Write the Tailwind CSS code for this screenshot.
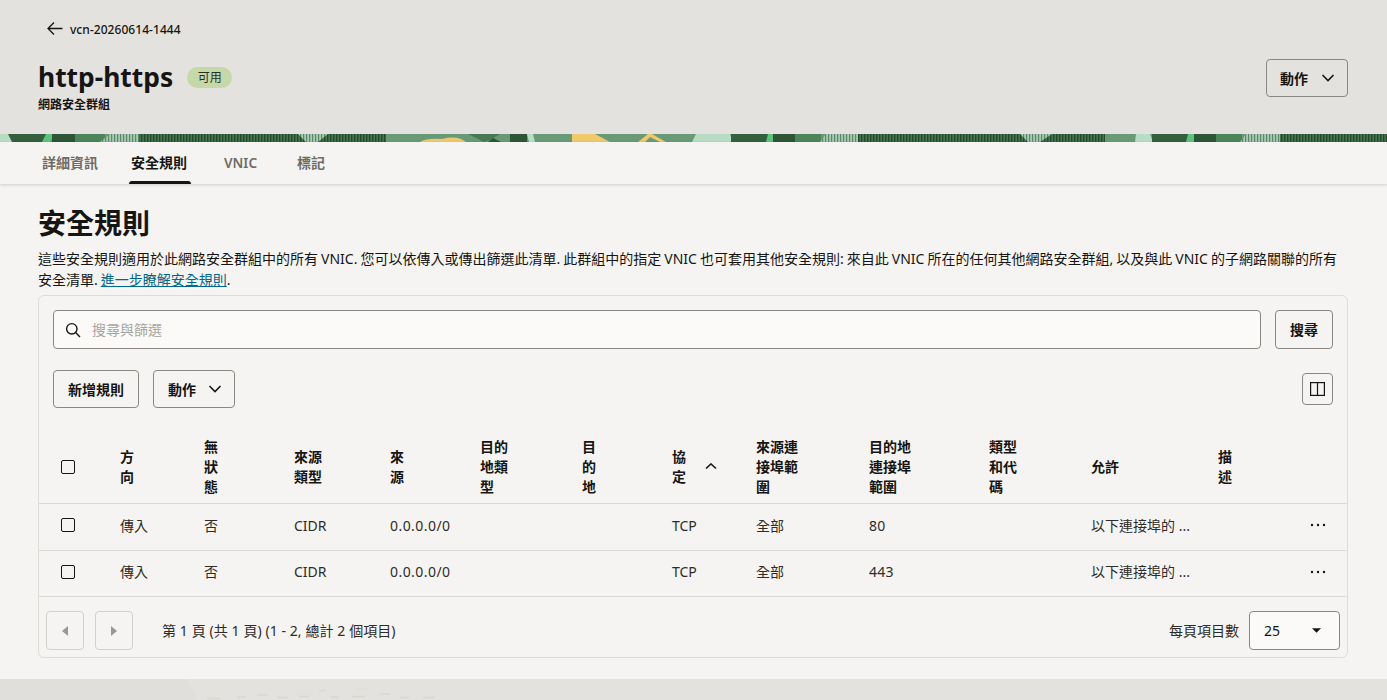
<!DOCTYPE html>
<html lang="zh-Hant">
<head>
<meta charset="utf-8">
<title>http-https</title>
<script src="https://cdn.jsdelivr.net/npm/@tailwindcss/browser@4"></script>
</head>
<body class="m-0 h-[700px] w-[1387px] overflow-hidden bg-[#f5f4f2] font-['Noto_Sans','Noto_Sans_CJK_TC',sans-serif] text-[14px] text-[#161513]">

<header class="h-[134px] bg-[#e4e2de] relative">
  <div class="flex items-center pl-[47px] pt-[20px] h-[38px]">
    <svg width="16" height="16" viewBox="0 0 16 16" fill="none" stroke="#161513" stroke-width="1.3"><path d="M15.5 8H1M7 2 1 8l6 6" transform="translate(0 -.5)"/></svg>
    <span class="ml-[7px] mt-[2px] text-[12px] font-medium leading-[18px] tracking-[0.05px]">vcn-20260614-1444</span>
  </div>
  <div class="flex items-start pl-[38px] pr-[39px] justify-between mt-[21px]">
    <div>
      <div class="flex items-center h-[36px]">
        <h1 class="text-[26.4px] font-bold leading-[36px] m-0">http-https</h1>
        <span class="ml-[14px] h-[21px] w-[45px] rounded-full bg-[#c4d9a7] text-[12px] leading-[21px] text-center text-[#2e2c29]">可用</span>
      </div>
      <div class="text-[12px] font-bold leading-[16px] mt-[2px]">網路安全群組</div>
    </div>
    <button class="h-[38px] w-[82px] rounded-[4px] border border-[#8a8783] flex items-center pl-[13px] font-semibold">
      <span>動作</span>
      <svg class="ml-[13px]" width="14" height="8" viewBox="0 0 14 8" fill="none" stroke="#161513" stroke-width="1.6"><path d="M1.5 1 7 6.5 12.5 1"/></svg>
    </button>
  </div>
</header>

<svg class="block" width="1387" height="8" viewBox="0 0 1387 8">
  <defs>
    <pattern id="fp" width="3" height="8" patternUnits="userSpaceOnUse">
      <rect width="3" height="8" fill="#447552"/>
      <rect width="1.4" height="8" fill="#28492f"/>
    </pattern>
    <pattern id="fl" width="3" height="8" patternUnits="userSpaceOnUse">
      <rect width="3" height="8" fill="#a9c9b3"/>
      <rect width="1.2" height="8" fill="#5b8a69"/>
    </pattern>
  </defs>
  <rect width="1387" height="8" fill="#699a78"/>
  <rect x="0" width="12" height="8" fill="#b8dcc4"/>
  <polygon points="8,0 48,0 46,8 12,8" fill="#34603f"/>
  <polygon points="46,0 54,0 50,8 42,8" fill="#5cc47a"/>
  <rect x="52" width="24" height="8" fill="#2e5538"/>
  <rect x="75" width="30" height="8" fill="#4e8459"/>
  <polygon points="110,0 140,0 140,8 100,8" fill="url(#fl)"/>
  <rect x="139" width="247" height="8" fill="url(#fp)"/>
  <polygon points="298,0 328,0 318,8 306,8" fill="url(#fl)"/>
  <path d="M420 8q6-4 22-3 15-4 24 3z" fill="#f0c96a"/>
  <path d="M468 0h32l-8 5-8 3-8-4z" fill="#457a55"/>
  <path d="M488 8l5-4 8 4z" fill="#2e5538"/>
  <rect x="510" width="17" height="8" fill="#2e5538"/>
  <polygon points="527,0 533,0 535,8 529,8" fill="#b8dcc4"/>
  <polygon points="572,0 595,0 610,8 572,8" fill="#f0c96a"/>
  <polygon points="638,8 648,0 652,0 666,8 660,8 650,3 645,8" fill="#f0c96a"/>
  <polygon points="696,0 730,0 733,8 692,8" fill="#b8dcc4"/>
  <rect x="731" width="37" height="8" fill="#34603f"/>
  <polygon points="768,0 775,0 773,8 766,8" fill="#5cc47a"/>
  <rect x="773" width="22" height="8" fill="#2e5538"/>
  <rect x="795" width="26" height="8" fill="#4e8459"/>
  <polygon points="826,0 858,0 858,8 820,8" fill="url(#fl)"/>
  <rect x="858" width="277" height="8" fill="url(#fp)"/>
  <polygon points="1020,0 1052,0 1040,8 1028,8" fill="url(#fl)"/>
  <rect x="1105" width="30" height="8" fill="#699a78"/>
  <polygon points="1136,0 1150,0 1153,8 1135,8" fill="#b8dcc4"/>
  <rect x="1152" width="36" height="8" fill="#34603f"/>
  <polygon points="1188,0 1196,0 1194,8 1186,8" fill="#5cc47a"/>
  <rect x="1194" width="22" height="8" fill="#2e5538"/>
  <rect x="1216" width="26" height="8" fill="#4e8459"/>
  <polygon points="1246,0 1280,0 1280,8 1240,8" fill="url(#fl)"/>
  <rect x="1280" width="107" height="8" fill="url(#fp)"/>
</svg>

<nav class="h-[42px] flex items-start pl-[42px] shadow-[0_1px_3px_rgba(0,0,0,0.16)] relative font-semibold text-[#6f6b67] leading-[42px]">
  <a>詳細資訊</a>
  <a class="ml-[33px] text-[#161513] relative h-[42px]">安全規則<span class="absolute left-[-2px] right-[-4px] bottom-0 h-[3px] rounded-t-[3px] bg-[#161513]"></span></a>
  <a class="ml-[37px] text-[13.6px]">VNIC</a>
  <a class="ml-[40px]">標記</a>
</nav>

<main class="px-[38px] pr-[39px]">
  <h2 class="m-0 mt-[20px] text-[28px] font-bold leading-[38px]">安全規則</h2>
  <p class="m-0 mt-[6px] text-[14px] leading-[21px] [word-spacing:-0.6px]">這些安全規則適用於此網路安全群組中的所有 VNIC. 您可以依傳入或傳出篩選此清單. 此群組中的指定 VNIC 也可套用其他安全規則: 來自此 VNIC 所在的任何其他網路安全群組, 以及與此 VNIC 的子網路關聯的所有安全清單. <a class="text-[#00688c] underline">進一步瞭解安全規則</a>.</p>

  <section class="mt-[5px] h-[363px] rounded-[6px] border border-[#dfdcd8] relative">
    <div class="flex pt-[14px] pl-[14px] pr-[14px] gap-[14px]">
      <div class="h-[39px] flex-1 rounded-[4px] border border-[#8a8783] bg-[#fbfaf8] flex items-center pl-[11px]">
        <svg width="16" height="16" viewBox="0 0 16 16" fill="none" stroke="#161513" stroke-width="1.4"><circle cx="6.8" cy="6.8" r="5.2"/><path d="m10.6 10.6 4.4 4.4"/></svg>
        <span class="ml-[11px] text-[#a8a5a1]">搜尋與篩選</span>
      </div>
      <button class="h-[39px] w-[58px] rounded-[4px] border border-[#8a8783] font-semibold">搜尋</button>
    </div>
    <div class="flex items-center pt-[21px] pl-[14px] pr-[14px] gap-[14px]">
      <button class="h-[38px] w-[86px] rounded-[4px] border border-[#8a8783] font-semibold">新增規則</button>
      <button class="h-[38px] w-[82px] rounded-[4px] border border-[#8a8783] flex items-center pl-[14px] font-semibold">
        <span>動作</span>
        <svg class="ml-[12px]" width="14" height="8" viewBox="0 0 14 8" fill="none" stroke="#161513" stroke-width="1.6"><path d="M1.5 1 7 6.5 12.5 1"/></svg>
      </button>
      <button class="ml-auto h-[32px] w-[31px] rounded-[4px] border border-[#8a8783] flex items-center justify-center">
        <svg width="15" height="14" viewBox="0 0 15 14" fill="none" stroke="#161513" stroke-width="1.2"><rect x=".6" y=".6" width="13.8" height="12.8"/><path d="M7.5.6v12.8"/></svg>
      </button>
    </div>

    <div class="mt-[23px] h-[73px] pb-[1px] border-b border-[#dcd9d5] grid grid-cols-[59px_84px_90px_96px_90px_102px_90px_84px_113px_120px_102px_127px_91px_1fr] pl-[22px] items-center font-semibold leading-[20px]">
      <span class="block size-[14px] rounded-[2px] border border-[#161513]"></span>
      <div>方<br>向</div>
      <div>無<br>狀<br>態</div>
      <div>來源<br>類型</div>
      <div>來<br>源</div>
      <div>目的<br>地類<br>型</div>
      <div>目<br>的<br>地</div>
      <div class="flex items-center"><div>協<br>定</div><svg class="ml-[19px]" width="12" height="7" viewBox="0 0 12 7" fill="none" stroke="#161513" stroke-width="1.6"><path d="m1 5.5 5-4.5 5 4.5"/></svg></div>
      <div>來源連<br>接埠範<br>圍</div>
      <div>目的地<br>連接埠<br>範圍</div>
      <div>類型<br>和代<br>碼</div>
      <div>允許</div>
      <div>描<br>述</div>
      <div></div>
    </div>

    <div class="h-[47px] pb-[4px] border-b border-[#dcd9d5] grid grid-cols-[59px_84px_90px_96px_90px_102px_90px_84px_113px_120px_102px_127px_91px_1fr] pl-[22px] items-center text-[#2e2c29]">
      <span class="block size-[14px] rounded-[2px] border border-[#161513]"></span>
      <div>傳入</div><div>否</div><div>CIDR</div><div class="tracking-[0.45px]">0.0.0.0/0</div><div></div><div></div><div>TCP</div><div>全部</div><div class="tracking-[0.3px]">80</div><div></div><div>以下連接埠的 ...</div><div></div>
      <svg class="ml-[1px]" width="16" height="4" viewBox="0 0 16 4" fill="#161513"><circle cx="2" cy="2" r="1.2"/><circle cx="8" cy="2" r="1.2"/><circle cx="14" cy="2" r="1.2"/></svg>
    </div>
    <div class="h-[46px] pb-[4px] border-b border-[#dcd9d5] grid grid-cols-[59px_84px_90px_96px_90px_102px_90px_84px_113px_120px_102px_127px_91px_1fr] pl-[22px] items-center text-[#2e2c29]">
      <span class="block size-[14px] rounded-[2px] border border-[#161513]"></span>
      <div>傳入</div><div>否</div><div>CIDR</div><div class="tracking-[0.45px]">0.0.0.0/0</div><div></div><div></div><div>TCP</div><div>全部</div><div class="tracking-[0.3px]">443</div><div></div><div>以下連接埠的 ...</div><div></div>
      <svg class="ml-[1px]" width="16" height="4" viewBox="0 0 16 4" fill="#161513"><circle cx="2" cy="2" r="1.2"/><circle cx="8" cy="2" r="1.2"/><circle cx="14" cy="2" r="1.2"/></svg>
    </div>

    <div class="flex items-center pl-[7px] pr-[7px] pt-[14px]">
      <button class="h-[39px] w-[38px] rounded-[4px] border border-[#d3d0cc] flex items-center justify-center">
        <svg width="6" height="10" viewBox="0 0 6 10" fill="#9b9894"><path d="M6 0v10L0 5z"/></svg>
      </button>
      <button class="ml-[11px] h-[39px] w-[38px] rounded-[4px] border border-[#d3d0cc] flex items-center justify-center">
        <svg width="6" height="10" viewBox="0 0 6 10" fill="#9b9894"><path d="M0 0v10l6-5z"/></svg>
      </button>
      <span class="ml-[29px] text-[#2e2c29] [word-spacing:0.2px]">第 1 頁 (共 1 頁) (1 - 2, 總計 2 個項目)</span>
      <span class="ml-auto text-[#2e2c29]">每頁項目數</span>
      <div class="ml-[10px] h-[39px] w-[91px] rounded-[4px] border border-[#8a8783] bg-[#fbfaf8] flex items-center justify-between pl-[14px] pr-[18px]">
        <span>25</span>
        <svg width="9" height="5" viewBox="0 0 10 5" fill="#161513"><path d="M0 0h10L5 5z"/></svg>
      </div>
    </div>
  </section>
</main>

<footer class="absolute left-0 top-[679px] w-[1387px] h-[21px] bg-[#e4e2de]">
  <svg class="block" width="1387" height="21" viewBox="0 0 1387 21">
    <polygon points="0,0 188,0 197,21 0,21" fill="#e1dfdb"/>
    <g stroke="#d9d7d2" stroke-width="1.5">
      <path d="M207 19.5h13M237 18h9M257 16h11M277 18.500h11M299 17.500h10M319 11.500h7M331 18h8M352 17.500h13M380 15h10M400 18.500h10M423 18.500h12"/>
    </g>
    <path d="M358 10h10" stroke="#dedcd7" stroke-width="1"/>
  </svg>
</footer>
</body>
</html>
